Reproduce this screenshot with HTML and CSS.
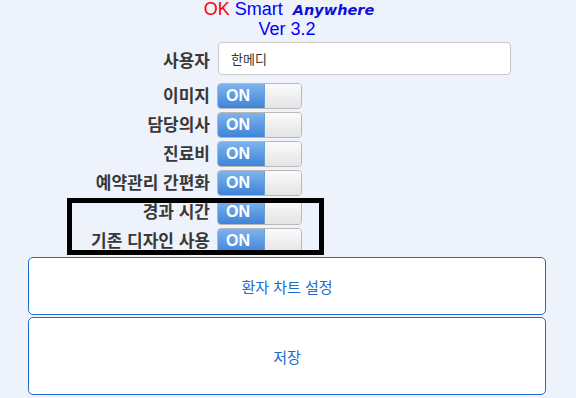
FILE: index.html
```html
<!DOCTYPE html>
<html lang="ko">
<head>
  <meta charset="UTF-8" />
  <meta name="viewport" content="width=device-width, initial-scale=1.0" />
  <title>OK Smart Anywhere 설정</title>
  <link rel="stylesheet" href="styles.css">
</head>
<body>
  <header class="title">
    <div><span class="ok">OK</span> <span class="smart">Smart</span>&nbsp; <span class="any">Anywhere</span></div>
    <div class="ver">Ver 3.2</div>
  </header>

  <div class="form">
    <label>사용자</label>
    <input class="user" type="text" value="한메디" />

    <label>이미지</label>
    <div class="toggle"><span class="on">ON</span><span class="knob"></span></div>

    <label>담당의사</label>
    <div class="toggle"><span class="on">ON</span><span class="knob"></span></div>

    <label>진료비</label>
    <div class="toggle"><span class="on">ON</span><span class="knob"></span></div>

    <label>예약관리 간편화</label>
    <div class="toggle"><span class="on">ON</span><span class="knob"></span></div>

    <label>경과 시간</label>
    <div class="toggle"><span class="on">ON</span><span class="knob"></span></div>

    <label>기존 디자인 사용</label>
    <div class="toggle"><span class="on">ON</span><span class="knob"></span></div>
  </div>

  <button class="wide first">환자 차트 설정</button>
  <button class="wide save">저장</button>

  <div class="mark"></div>
</body>
</html>
```

FILE: styles.css
```css
body {
  margin: 0;
  background: #eef2fb;
  font-family: 'Liberation Sans', 'Noto Sans CJK KR', sans-serif;
  color: #333;
  position: relative;
  height: 398px;
  overflow: hidden;
}
.title {
  text-align: center;
  font-size: 18px;
  line-height: 19px;
  padding-left: 2px;
}
.ok {
  color: #f00;
}
.smart {
  color: #0000ff;
}
.any {
  color: #1010d8;
  font-family: 'DejaVu Sans', sans-serif;
  font-weight: bold;
  font-style: italic;
  font-size: 14.5px;
}
.ver {
  color: #0000ff;
  margin-left: -4px;
}
.form {
  display: grid;
  grid-template-columns: 210px 293px;
  column-gap: 7px;
  row-gap: 3px;
  margin-top: 3px;
  align-items: center;
}
.form label {
  text-align: right;
  font-family: 'Noto Sans CJK KR', sans-serif;
  font-weight: bold;
  font-size: 17px;
  color: #383838;
  line-height: 20px;
  margin-top: -2px;
}
.user {
  box-sizing: border-box;
  height: 33px;
  width: 293px;
  margin-left: 1px;
  margin-bottom: 5px;
  border: 1px solid #c8c8c8;
  border-radius: 4px;
  background: #fff;
  padding: 0 12px;
  font-family: 'Noto Sans CJK KR', sans-serif;
  font-size: 13px;
  color: #333;
}
.toggle {
  display: flex;
  box-sizing: border-box;
  width: 85px;
  height: 26px;
  border-radius: 4px;
  overflow: hidden;
  border: 1px solid #b8b8b8;
}
.toggle .on {
  width: 47px;
  background: linear-gradient(#7fb3ee, #3f83d8);
  color: #fff;
  font-weight: bold;
  font-size: 16px;
  line-height: 24px;
  padding-left: 8px;
  box-sizing: border-box;
  border-right: 1px solid #6a9fd8;
}
.toggle .knob {
  flex: 1;
  background: linear-gradient(#fbfbfb, #e4e4e4);
}
.wide {
  display: block;
  box-sizing: border-box;
  width: 518px;
  margin-left: 28px;
  background: #fff;
  border: 1.5px solid #1c6cce;
  border-radius: 5px;
  color: #1c6cce;
  font-family: 'Noto Sans CJK KR', sans-serif;
  font-size: 15px;
}
.first {
  height: 58px;
  margin-top: 3px;
}
.save {
  height: 78px;
  margin-top: 2px;
}
.mark {
  position: absolute;
  left: 67px;
  top: 198px;
  width: 257px;
  height: 57px;
  box-sizing: border-box;
  border: 5px solid #000;
}
```
